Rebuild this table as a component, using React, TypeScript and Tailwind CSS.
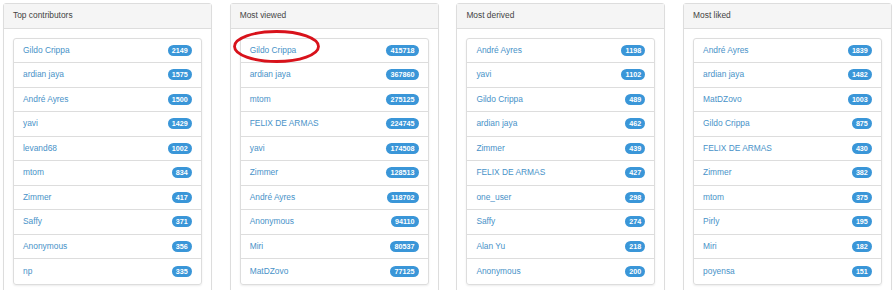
type Entry = { name: string; count: number };
type Board = { title: string; rows: Entry[] };

const boards: Board[] = [
  {
    title: "Top contributors",
    rows: [
      { name: "Gildo Crippa", count: 2149 },
      { name: "ardian jaya", count: 1575 },
      { name: "André Ayres", count: 1500 },
      { name: "yavi", count: 1429 },
      { name: "levand68", count: 1002 },
      { name: "mtom", count: 834 },
      { name: "Zimmer", count: 417 },
      { name: "Saffy", count: 371 },
      { name: "Anonymous", count: 356 },
      { name: "np", count: 335 },
    ],
  },
  {
    title: "Most viewed",
    rows: [
      { name: "Gildo Crippa", count: 415718 },
      { name: "ardian jaya", count: 367860 },
      { name: "mtom", count: 275125 },
      { name: "FELIX DE ARMAS", count: 224745 },
      { name: "yavi", count: 174508 },
      { name: "Zimmer", count: 128513 },
      { name: "André Ayres", count: 118702 },
      { name: "Anonymous", count: 94110 },
      { name: "Miri", count: 80537 },
      { name: "MatDZovo", count: 77125 },
    ],
  },
  {
    title: "Most derived",
    rows: [
      { name: "André Ayres", count: 1198 },
      { name: "yavi", count: 1102 },
      { name: "Gildo Crippa", count: 489 },
      { name: "ardian jaya", count: 462 },
      { name: "Zimmer", count: 439 },
      { name: "FELIX DE ARMAS", count: 427 },
      { name: "one_user", count: 298 },
      { name: "Saffy", count: 274 },
      { name: "Alan Yu", count: 218 },
      { name: "Anonymous", count: 200 },
    ],
  },
  {
    title: "Most liked",
    rows: [
      { name: "André Ayres", count: 1839 },
      { name: "ardian jaya", count: 1482 },
      { name: "MatDZovo", count: 1003 },
      { name: "Gildo Crippa", count: 875 },
      { name: "FELIX DE ARMAS", count: 430 },
      { name: "Zimmer", count: 382 },
      { name: "mtom", count: 375 },
      { name: "Pirly", count: 195 },
      { name: "Miri", count: 182 },
      { name: "poyensa", count: 151 },
    ],
  },
];

function Panel({ board }: { board: Board }) {
  return (
    <div className="border border-[#dddddd] rounded-[3px] bg-white shadow-[0_1px_1px_rgba(0,0,0,0.05)]">
      <div className="h-[24.5px] px-[9px] flex items-center bg-[#f5f5f5] border-b border-[#dddddd] text-[8.4px] text-[#444444]">
        {board.title}
      </div>
      <div className="p-[9px]">
        <div className="border border-[#dddddd] rounded-[3px] shadow-[0_1px_2px_rgba(0,0,0,0.075)]">
          {board.rows.map((r, i) => (
            <div
              key={r.name}
              className={[
                "h-[24.5px] px-[9px] flex items-center justify-between",
                i < board.rows.length - 1 ? "border-b border-[#dddddd]" : "",
              ].join(" ")}
            >
              <span className="text-[8.4px] text-[#4892c8]">{r.name}</span>
              <span className="rounded-[6px] bg-[#3a96d8] text-white text-[7.2px] font-bold leading-none px-[4.2px] py-[1.8px]">
                {r.count}
              </span>
            </div>
          ))}
        </div>
      </div>
    </div>
  );
}

export default function App() {
  return (
    <div
      className="relative w-[895px] h-[290px] overflow-hidden bg-white pt-[3px] px-[3px]"
      style={{ fontFamily: '"Liberation Sans", Arial, sans-serif' }}
    >
      <div className="grid grid-cols-[repeat(4,209px)] gap-x-[17.7px]">
        {boards.map((b) => (
          <Panel key={b.title} board={b} />
        ))}
      </div>

      {/* hand-drawn highlight on the first "Most viewed" row */}
      <svg className="absolute left-[231px] top-[29px]" width="92" height="36" viewBox="0 0 92 36">
        <ellipse cx="45.5" cy="17.5" rx="42" ry="15" fill="none" stroke="#d8121b" strokeWidth="2.8" />
      </svg>
    </div>
  );
}
